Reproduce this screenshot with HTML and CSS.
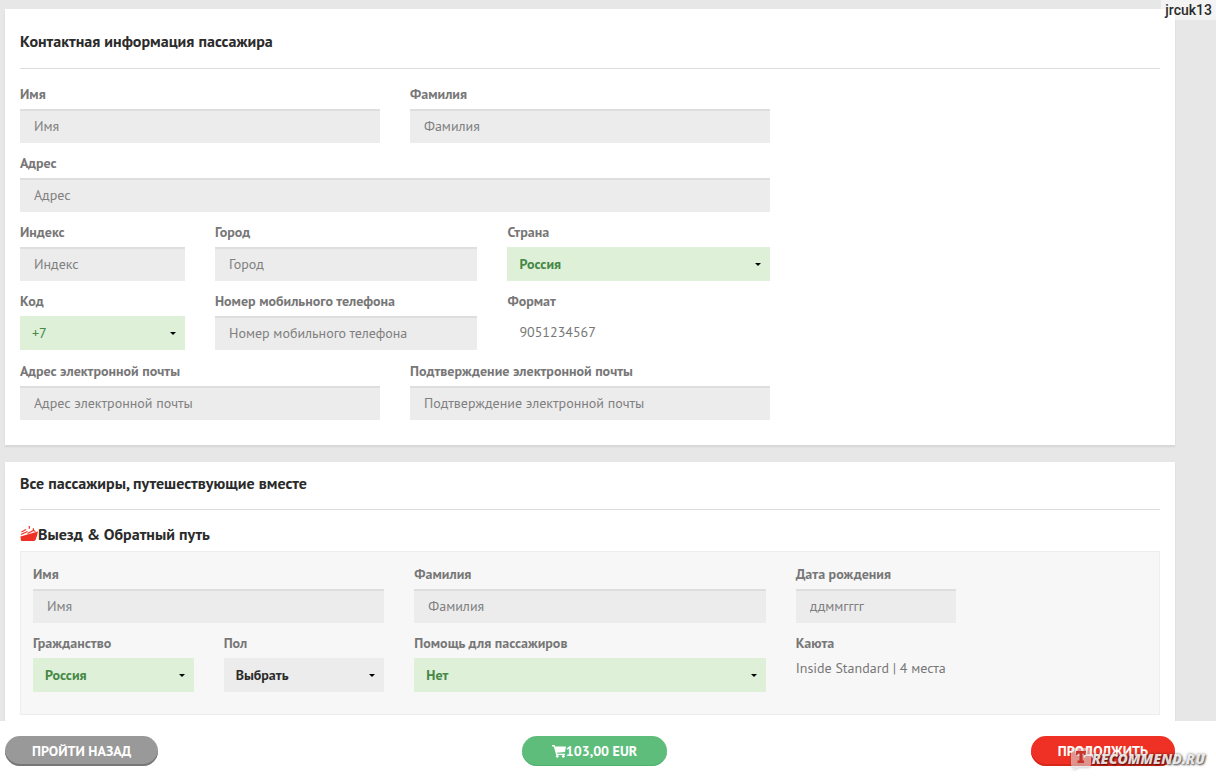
FILE: index.html
```html
<!DOCTYPE html>
<html lang="ru">
<head>
<meta charset="utf-8">
<meta name="viewport" content="width=device-width, initial-scale=1">
<title>Пассажиры</title>
<link rel="stylesheet" href="styles.css">
</head>
<body>
<main class="page">
  <section class="panel panel-contact">
    <h2 class="panel-title">Контактная информация пассажира</h2>
    <div class="contact-form">
      <div class="row">
        <div class="field"><label for="c-first">Имя</label><input class="control" id="c-first" type="text" placeholder="Имя"></div>
        <div class="field"><label for="c-last">Фамилия</label><input class="control" id="c-last" type="text" placeholder="Фамилия"></div>
      </div>
      <div class="row">
        <div class="field"><label for="c-address">Адрес</label><input class="control" id="c-address" type="text" placeholder="Адрес"></div>
      </div>
      <div class="row">
        <div class="field field-short"><label for="c-zip">Индекс</label><input class="control" id="c-zip" type="text" placeholder="Индекс"></div>
        <div class="field"><label for="c-city">Город</label><input class="control" id="c-city" type="text" placeholder="Город"></div>
        <div class="field"><label for="c-country">Страна</label><span class="picker"><select class="control select chosen" id="c-country"><option>Россия</option></select></span></div>
      </div>
      <div class="row">
        <div class="field field-short"><label for="c-code">Код</label><span class="picker"><select class="control select chosen light" id="c-code"><option>+7</option></select></span></div>
        <div class="field"><label for="c-phone">Номер мобильного телефона</label><input class="control" id="c-phone" type="tel" placeholder="Номер мобильного телефона"></div>
        <div class="field"><span class="label">Формат</span><span class="format">9051234567</span></div>
      </div>
      <div class="row">
        <div class="field"><label for="c-mail">Адрес электронной почты</label><input class="control" id="c-mail" type="email" placeholder="Адрес электронной почты"></div>
        <div class="field"><label for="c-mail2">Подтверждение электронной почты</label><input class="control" id="c-mail2" type="email" placeholder="Подтверждение электронной почты"></div>
      </div>
    </div>
  </section>

  <section class="panel panel-group">
    <h2 class="panel-title">Все пассажиры, путешествующие вместе</h2>
    <h3 class="trip"><svg class="ship" viewBox="0 0 18 18" aria-hidden="true"><path d="M.5 11.500 L9 9 L18 6.500 Q17 12 15.500 15 Q15 16 13.500 16 H2 Q.8 16 .8 14.500Z"/><path d="M1 9.500 L7.500 6.500 M1.500 7 L6 4.500 M7.500 8.500 L13.500 5.500 L15.500 6.500" fill="none" stroke="currentColor" stroke-width="1.200"/><path d="M8.700 1h1.200v2.800H8.700z M12.800 3.200h1.200v2h-1.200z"/></svg>Выезд &amp; Обратный путь</h3>
    <div class="passenger">
      <div class="field wide"><label for="p-first">Имя</label><input class="control" id="p-first" type="text" placeholder="Имя"></div>
      <div class="field wide"><label for="p-last">Фамилия</label><input class="control" id="p-last" type="text" placeholder="Фамилия"></div>
      <div class="field"><label for="p-birth">Дата рождения</label><input class="control" id="p-birth" type="text" placeholder="ддммгггг"></div>
      <div class="field newline"><label for="p-nation">Гражданство</label><span class="picker"><select class="control select chosen" id="p-nation"><option>Россия</option></select></span></div>
      <div class="field"><label for="p-sex">Пол</label><span class="picker"><select class="control select" id="p-sex"><option>Выбрать</option></select></span></div>
      <div class="field wide"><label for="p-help">Помощь для пассажиров</label><span class="picker"><select class="control select chosen" id="p-help"><option>Нет</option></select></span></div>
      <div class="field wide"><span class="label">Каюта</span><span>Inside Standard | 4 места</span></div>
    </div>
  </section>
</main>

<footer class="actions">
  <button class="pill back" type="button">ПРОЙТИ НАЗАД</button>
  <button class="pill total" type="button"><svg class="cart" viewBox="0 0 14 14" aria-hidden="true"><path d="M0 1h2.500l.7 1.500H14l-1 5.500-8 .8.300 1H13v1.200H4.200L1.800 2.500H0z"/><circle cx="5.300" cy="12.300" r="1.400"/><circle cx="11.300" cy="12.300" r="1.400"/></svg>103,00 EUR</button>
  <button class="pill next" type="button">ПРОДОЛЖИТЬ</button>
</footer>

<div class="user-tag">jrcuk13</div>
<div class="site-mark"><svg class="bubble" viewBox="0 0 22 24" aria-hidden="true"><path class="bubble-body" d="M3 1h15q3 0 3 3v13q0 3-3 3h-9l-6 3 1-3H3q-2 0-2-3V4q0-3 2-3z"/><path class="bubble-mark" d="M6 4h10l-.5 4h-1.500l-.5-1.500H12.500v7H14v2.500H7.500v-2.500H9.500v-7H8L7.500 8H6z"/></svg>RECOMMEND.RU</div>
</body>
</html>
```

FILE: styles.css
```css
* { box-sizing: border-box; }

body {
  margin: 0;
  min-height: 100vh;
  display: flex;
  flex-direction: column;
  position: relative;
  background: #e7e7e7;
  color: #777;
  font: 14px/20px "PT Sans", "Noto Sans", sans-serif;
}

.page {
  flex: 1;
  display: flex;
  flex-direction: column;
  gap: 17px;
  padding: 9px 41px 0 5px;
}

.panel {
  padding: 0 15px;
  background: #fff;
  box-shadow: 0 2px 2px rgba(0, 0, 0, .08);
}
.panel-contact { padding-top: 22px; padding-bottom: 15px; }
.panel-group { flex: 1; padding-top: 11px; padding-bottom: 6px; }

.panel-title,
.trip {
  margin: 0;
  color: #2b2b2b;
  font-size: 16px;
  line-height: 20px;
  font-weight: 700;
}
.panel-title {
  margin-bottom: 15px;
  padding-bottom: 17px;
  border-bottom: 1px solid #ddd;
}
.panel-group .panel-title { margin-bottom: 14px; padding-bottom: 16px; }

.contact-form { width: calc(200% / 3 - 10px); }
.row { display: flex; gap: 30px; margin-bottom: 10px; }

.field {
  flex: 1;
  min-width: 0;
  display: flex;
  flex-direction: column;
}
.field-short { flex: 0 0 22%; }

label,
.label { margin-bottom: 5px; font-weight: 700; white-space: nowrap; }

.control {
  width: 100%;
  height: 34px;
  padding: 0 14px;
  border: 0;
  border-radius: 0;
  background: #ececec;
  box-shadow: inset 0 2px #dedede;
  color: #777;
  font: inherit;
}
.control::placeholder { color: #808080; opacity: 1; }

.picker { position: relative; display: block; }
.picker::after {
  content: "";
  position: absolute;
  top: 16px;
  right: 9px;
  border: 3px solid transparent;
  border-top-color: #000;
  border-bottom: 0;
  pointer-events: none;
}
.select {
  display: block;
  appearance: none;
  padding: 0 12px;
  box-shadow: none;
  color: #2b2b2b;
  font-weight: 700;
}
.chosen { background: #dff0d8; color: #468847; }
.light { font-weight: 400; }

.format { height: 35px; padding: 6px 12px 9px; }

.trip { display: flex; align-items: center; margin-bottom: 7px; }
.ship { width: 18px; height: 18px; fill: #ee3124; color: #ee3124; }

.passenger {
  display: grid;
  grid-template-columns: repeat(6, minmax(0, 1fr));
  gap: 10px 30px;
  padding: 12px 12px 22px;
  border: 1px solid #ededed;
  background: #f7f7f7;
}
.wide { grid-column: span 2; }
.newline { grid-column-start: 1; }

.actions {
  position: sticky;
  bottom: 0;
  display: flex;
  justify-content: space-between;
  padding: 15px 41px 14px 5px;
  background: #fff;
}
.pill {
  display: flex;
  align-items: center;
  height: 30px;
  padding: 0 27px 1px;
  border: 0;
  border-radius: 15px;
  color: #fff;
  font: 700 14px/20px "PT Sans", "Noto Sans", sans-serif;
}
.back { background: #999; box-shadow: inset 0 -2px #777; }
.total { padding: 0 30px 1px; background: #5fbd7c; box-shadow: inset 0 -1px #4fb26e; }
.next { background: #ee3124; box-shadow: inset 0 -2px #d9261a; }
.cart { width: 14px; height: 14px; fill: #fff; }

.user-tag {
  position: absolute;
  top: 0;
  right: 0;
  padding: 0 4px;
  background: rgba(255, 255, 255, .5);
  color: #2b2b2b;
  font: 500 14px/20px Roboto, sans-serif;
}

.site-mark {
  position: absolute;
  right: 11px;
  bottom: 9px;
  display: flex;
  align-items: center;
  color: rgba(255, 255, 255, .85);
  font: italic 800 14px/24px "Open Sans", sans-serif;
  text-shadow: 1px 1px 2px rgba(0, 0, 0, .6), 0 0 3px rgba(0, 0, 0, .5);
  pointer-events: none;
}
.bubble { width: 22px; height: 24px; filter: drop-shadow(0 1px 1px rgba(0, 0, 0, .35)); }
.bubble-body { fill: rgba(255, 255, 255, .5); }
.bubble-mark { fill: #c8332c; }
```
